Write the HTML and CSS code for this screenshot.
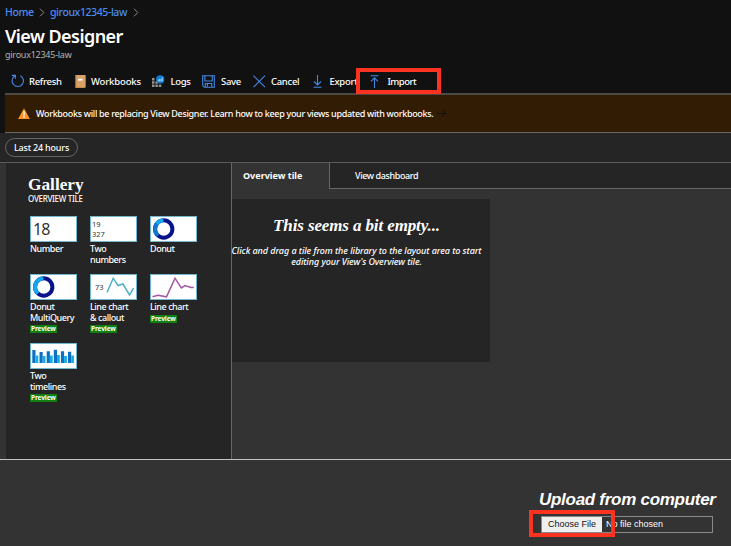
FILE: index.html
```html
<!DOCTYPE html>
<html lang="en">
<head>
<meta charset="utf-8">
<title>View Designer</title>
<link rel="stylesheet" href="styles.css">
</head>
<body>
<header class="header">
  <nav class="crumbs">
    <a class="crumb crumb-home">Home</a>
    <svg class="chevron" width="6" height="9" viewBox="0 0 6 9"><path d="M1 .7 4.8 4.5 1 8.3"/></svg>
    <a class="crumb crumb-law">giroux12345-law</a>
    <svg class="chevron" width="6" height="9" viewBox="0 0 6 9"><path d="M1 .7 4.8 4.5 1 8.3"/></svg>
  </nav>
  <h1 class="title"><span>View Designer</span></h1>
  <div class="subtitle"><span>giroux12345-law</span></div>
  <div class="toolbar">
    <div class="tool refresh">
      <svg class="line-icon" width="14" height="14" viewBox="0 0 14 14"><path d="M4.1 1.8A5.7 5.7 0 1 0 9.3 1.7M.9 1.4H4.4V4.8"/></svg><span>Refresh</span>
    </div>
    <div class="tool workbooks">
      <svg width="11" height="13" viewBox="0 0 11 13"><rect width="10.5" height="13" rx=".8" fill="#c58a4b"/><path d="M0 .5H1.2V12.5H0z" fill="#9e6832"/><rect x="1.4" y="0" width="9" height="12" fill="#d7a268"/><rect x="3" y="3.8" width="4.5" height="1.8" fill="#fff"/></svg><span>Workbooks</span>
    </div>
    <div class="tool logs">
      <svg width="13" height="13" viewBox="0 0 13 13"><g fill="#929292"><path d="M0 3h2.5v2.5H0zM0 6.3h2.5v2.5H0zM0 9.6h2.5v2.5H0zM3.4 6.3h2.5v2.5H3.4zM3.4 9.6h2.5v2.5H3.4zM6.8 9.6h2.5v2.5H6.8z"/></g><circle cx="8.2" cy="4.4" r="4.1" fill="#0c7dd8"/><path d="M6.4 6.3V4.6M7.7 6.3V3.8M9 6.3V4.2M10.2 6.3V2.5" stroke="#d9efff" stroke-width=".8"/></svg><span>Logs</span>
    </div>
    <div class="tool save">
      <svg class="line-icon" width="13" height="13" viewBox="0 0 13 13"><path d="M.7.7H12.3V12.3H2.4L.7 10.6zM2.9.7V6H10.2V.7M3.3 12V8.5H9.7V12M5.4 9V11.6"/></svg><span>Save</span>
    </div>
    <div class="tool cancel">
      <svg class="line-icon" width="13" height="13" viewBox="0 0 13 13"><path d="M.5.7 12 12.2M12 .7.5 12.2"/></svg><span>Cancel</span>
    </div>
    <div class="tool export">
      <svg class="line-icon" width="9" height="13" viewBox="0 0 9 13"><path d="M4.5 0V9.8M1 6.5 4.5 10 8 6.5M.6 12.3H8.4"/></svg><span>Export</span>
    </div>
    <div class="tool import">
      <svg class="line-icon" width="9" height="13" viewBox="0 0 9 13"><path d="M.6.8H8.4M4.5 13V3M1 6.4 4.5 2.9 8 6.4"/></svg><span>Import</span>
    </div>
  </div>
  <div class="highlight highlight-import"></div>
</header>

<div class="warning">
  <svg width="12" height="11" viewBox="0 0 12 11"><path d="M6 .2 11.9 10.9H.1z" fill="#ff9425"/><path d="M6 3.2V7.4M6 8.3V9.7" stroke="#fff" stroke-width="1.4"/></svg>
  <span class="warning-text">Workbooks will be replacing View Designer. Learn how to keep your views updated with workbooks.</span>
  <svg class="arrow" width="9" height="7" viewBox="0 0 9 7"><path d="M0 3.5H8.4M5.4.5 8.4 3.5 5.4 6.5"/></svg>
</div>

<div class="filters"><div class="pill"><span>Last 24 hours</span></div></div>

<main class="main">
  <aside class="gallery">
    <h2 class="gallery-title"><span>Gallery</span></h2>
    <div class="gallery-sub"><span>OVERVIEW TILE</span></div>
    <div class="tiles">
      <div class="tile"><div class="thumb big-number">18</div><span>Number</span></div>
      <div class="tile"><div class="thumb two-numbers">19<br>327</div><span>Two<br>numbers</span></div>
      <div class="tile"><div class="thumb"><svg width="45" height="24" viewBox="0 0 45 24"><g fill="none" stroke-width="4"><circle cx="12.7" cy="12" r="8.7" stroke="#08128d"/><path d="M7 18.6A8.7 8.7 0 0 1 5.6 7" stroke="#1279d0"/><path d="M5.6 7A8.7 8.7 0 0 1 12.3 3.3" stroke="#13a9ed"/></g></svg></div><span>Donut</span></div>
      <div class="tile"><div class="thumb"><svg width="45" height="24" viewBox="0 0 45 24"><g fill="none" stroke-width="4"><circle cx="12.7" cy="12" r="8.7" stroke="#08128d"/><path d="M7 18.6A8.7 8.7 0 0 1 5.6 7" stroke="#13a9ed"/><path d="M5.6 7A8.7 8.7 0 0 1 12.3 3.3" stroke="#13a9ed"/></g></svg></div><span>Donut<br>MultiQuery</span><b class="badge">Preview</b></div>
      <div class="tile"><div class="thumb callout"><i>73</i><svg width="28" height="24" viewBox="0 0 28 24"><path d="M1 17.5 7.2 3.2 12 10.5 17 9 23.5 20 27.5 13" fill="none" stroke="#4eb2c5" stroke-width="1.5"/></svg></div><span>Line chart<br>&amp; callout</span><b class="badge">Preview</b></div>
      <div class="tile"><div class="thumb"><svg width="45" height="24" viewBox="0 0 45 24"><path d="M1.5 21.8 7 20.2 15.5 21.8 24 3.2 30.3 13 34 10.6 40 12.4 42.8 12.6" fill="none" stroke="#a457a3" stroke-width="1.5"/></svg></div><span>Line chart</span><b class="badge">Preview</b></div>
      <div class="tile"><div class="thumb"><svg width="45" height="24" viewBox="0 0 45 24"><path fill="#0d70c4" d="M1.3 6h3.2v13H1.3zM8.5 8h3.2v11H8.5zM15.7 7.3h3.2V19h-3.2zM22.8 5.7H26V19h-3.2zM29.9 7.2h3.2V19h-3.2zM37 7.7h3.2V19H37z"/><path fill="#16ace8" d="M4.5 11.5h2.8V19H4.5zM11.7 12h2.8v7h-2.8zM18.9 11.5h2.8V19h-2.8zM26 11h2.8v8H26zM33.1 12h2.8v7h-2.8zM40.2 11.5H43V19h-2.8z"/></svg></div><span>Two<br>timelines</span><b class="badge">Preview</b></div>
    </div>
  </aside>
  <section class="designer">
    <div class="tabs">
      <div class="tab active"><span>Overview tile</span></div>
      <div class="tab rest"><span>View dashboard</span></div>
    </div>
    <div class="canvas">
      <h3 class="empty-title"><span>This seems a bit empty...</span></h3>
      <p class="empty-text"><span>Click and drag a tile from the library to the layout area to start</span><br><span>editing your View's Overview tile.</span></p>
    </div>
  </section>
</main>

<footer class="upload">
  <div class="upload-box">
    <h2 class="upload-title"><span>Upload from computer</span></h2>
    <div class="file-field"><span class="choose">Choose File</span><span class="nofile">No file chosen</span><div class="highlight highlight-file"></div></div>
  </div>
</footer>
</body>
</html>
```
FILE: styles.css
```css
* { box-sizing: border-box; }
body {
  margin: 0;
  width: 731px;
  height: 546px;
  overflow: hidden;
  background: #333;
  color: #fff;
  font-family: "Noto Sans", "Open Sans", sans-serif;
  font-size: 10px;
  display: flex;
  flex-direction: column;
}
h1, h2, h3, p { margin: 0; }
svg { display: block; flex: none; }
span { white-space: nowrap; }

.header { height: 93px; background: #111; flex: none; padding-top: 5px; position: relative; }
.crumbs { display: flex; align-items: center; height: 14px; padding: 0 5px; color: #4b8df0; font-size: 10.5px; font-weight: 500; letter-spacing: -0.4px; }
.crumb-home { width: 34px; }
.crumb-law { width: 83px; margin-left: 5px; }
.chevron { fill: none; stroke: #8c8c8c; stroke-width: 1; }
.title { margin-top: 6px; padding-left: 5px; height: 23px; line-height: 23px; font-size: 18px; font-weight: 600; letter-spacing: -0.55px; }
.subtitle { padding-left: 5px; height: 12px; line-height: 14px; font-size: 9px; letter-spacing: -0.25px; color: #b3b3b3; }
.toolbar { display: flex; height: 20px; margin-top: 11px; padding-left: 11px; }
.tool { display: flex; align-items: center; gap: 5px; font-size: 9.5px; font-weight: 500; letter-spacing: -0.3px; }
.line-icon { fill: none; stroke: #4388e6; stroke-width: 1.1; }
.refresh { width: 64px; gap: 4px; }
.workbooks { width: 77px; letter-spacing: -0.15px; }
.logs { width: 50px; gap: 5.5px; }
.save { width: 51px; gap: 6px; }
.cancel { width: 60px; }
.export { width: 57px; gap: 7.5px; }
.import { gap: 8.5px; letter-spacing: -0.5px; }

.highlight { position: absolute; border: 4px solid #fb3320; }
.highlight-import { left: 356px; top: 68px; width: 85px; height: 26px; z-index: 2; }

.warning { flex: none; display: flex; align-items: center; height: 40px; margin-left: 5px; padding-left: 13px; border-top: 2px solid #4b4846; border-bottom: 1px solid #666; background: #331c04; box-shadow: -5px 0 #111; font-size: 9px; font-weight: 500; letter-spacing: -0.32px; }
.warning-text { width: 397px; margin-left: 6px; }
.arrow { margin-left: 4px; fill: none; stroke: #111; stroke-width: 1; }

.filters { flex: none; display: flex; align-items: center; height: 30px; padding-left: 5px; background: #252525; border-bottom: 1px solid #5a5a5a; }
.pill { width: 73px; height: 19px; border: 1px solid #666; border-radius: 10px; display: flex; align-items: center; justify-content: center; font-size: 9px; font-weight: 500; letter-spacing: -0.2px; }

.main { flex: none; display: flex; height: 297px; padding-left: 6px; border-bottom: 1px solid #c4c4c4; }
.gallery { width: 226px; background: #252525; border-right: 1px solid #666; padding: 12px 0 0 22px; }
.gallery-title { height: 19px; font: bold 17.3px/19px "Liberation Serif", serif; }
.gallery-sub { height: 10px; line-height: 10px; font-size: 8px; font-weight: 500; letter-spacing: -0.3px; }
.tiles { display: grid; grid-template-columns: repeat(3, 60px); grid-template-rows: 58px 69px 60px; padding: 12px 0 0 2px; }
.tile { display: flex; flex-direction: column; align-items: flex-start; font-size: 9px; font-weight: 500; line-height: 10.5px; letter-spacing: -0.45px; }
.tile i { font-style: normal; }
.thumb { width: 47px; height: 26px; margin-bottom: 2px; background: #fff; border: 1px solid #74b7d0; color: #333; flex: none; font-weight: 400; letter-spacing: 0; }
.big-number { font-size: 16px; line-height: 25px; padding-left: 2px; letter-spacing: -0.8px; }
.two-numbers { font-size: 7.5px; line-height: 10px; padding: 2px 0 0 1px; }
.callout { display: flex; align-items: center; font-size: 7.5px; padding-left: 4px; }
.callout i { width: 11px; }
.badge { height: 8px; margin-top: 2px; padding: 0 1px; background: #108010; font-size: 6.5px; line-height: 8px; letter-spacing: -0.1px; }

.designer { flex: 1; }
.tabs { display: flex; height: 26px; font-size: 9px; line-height: 26px; }
.tab { padding-left: 11px; }
.active { width: 98px; border-right: 1px solid #666; font-weight: 700; }
.rest { flex: 1; padding-left: 25px; background: #252525; border-bottom: 1px solid #666; font-weight: 500; letter-spacing: -0.4px; }
.canvas { width: 258px; height: 163px; margin-top: 10px; background: #252525; text-align: center; font-style: italic; }
.empty-title { padding-top: 17px; margin-left: -9px; font: italic bold 17px/20px "Liberation Serif", serif; letter-spacing: -0.12px; }
.empty-text { margin-top: 10px; margin-left: -9px; font-size: 9px; font-weight: 500; line-height: 10.5px; letter-spacing: -0.07px; }

.upload { flex: 1; display: flex; justify-content: flex-end; padding: 29px 14px 0 0; font-family: "Liberation Sans", Arial, sans-serif; }
.upload-box { width: 178px; }
.upload-title { height: 21px; font-size: 17px; line-height: 21px; font-style: italic; font-weight: 700; letter-spacing: -0.28px; }
.file-field { position: relative; display: flex; width: 172px; height: 17px; margin: 6px 0 0 2px; border: 1px solid #888; font-size: 9px; line-height: 15px; }
.choose { width: 60px; background: #efefef; color: #111; text-align: center; }
.nofile { margin-left: 4px; }
.highlight-file { left: -13px; top: -7px; width: 86px; height: 27px; }
```
